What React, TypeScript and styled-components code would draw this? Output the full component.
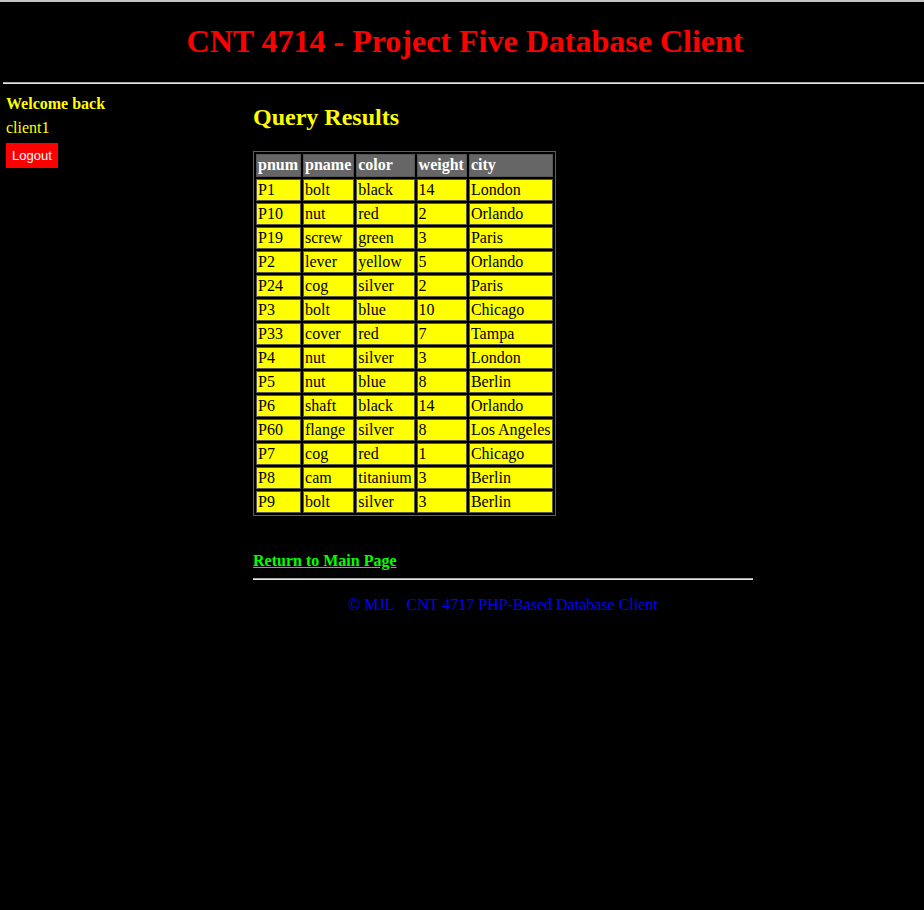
import React from 'react';
import styled, { createGlobalStyle } from 'styled-components';

const GlobalStyle = createGlobalStyle`
  html, body {
    margin: 0;
    padding: 0;
    background: #000;
  }
  body {
    font-family: "Liberation Serif", "Times New Roman", serif;
    font-size: 16px;
    color: #fff;
  }
`;

const Page = styled.div`
  min-height: 100vh;
  background: #000;
  border-top: 2px solid #c4c4c4;
`;

const Header = styled.header`
  padding-left: 6px;
  text-align: center;
`;

const Title = styled.h1`
  margin: 21px 0 22px;
  font-size: 32px;
  font-weight: bold;
  color: #ff0000;
`;

const Rule = styled.hr<{ $width?: string; $indent?: string; $top?: string }>`
  margin: ${(p) => p.$top || '0'} 0 0 ${(p) => p.$indent || '0'};
  width: ${(p) => p.$width || 'auto'};
  height: 0;
  border: 0;
  border-top: 1px solid #a8a8a8;
  border-bottom: 1px solid #e4e4e4;
`;

const Layout = styled.div`
  display: flex;
  align-items: flex-start;
`;

const Sidebar = styled.aside`
  width: 247px;
  padding: 8px 0 0 6px;
  color: #ffff00;
  line-height: 24px;
`;

const Welcome = styled.div`
  font-weight: bold;
`;

const UserName = styled.div``;

const LogoutButton = styled.button`
  margin-top: 3px;
  padding: 5px 6px;
  border: 0;
  background: #ff0000;
  color: #fff;
  font-family: "Liberation Sans", Arial, sans-serif;
  font-size: 13px;
  line-height: 15px;
  cursor: pointer;
`;

const Main = styled.main`
  width: 500px;
`;

const Heading = styled.h2`
  margin: 20px 0 20px;
  font-size: 24px;
  font-weight: bold;
  color: #ffff00;
`;

const ResultsTable = styled.table`
  border: 1px solid #5e5e5e;
  border-spacing: 2px;
  border-collapse: separate;
  font-size: 16px;
`;

const HeadCell = styled.th`
  padding: 1px 2px 2px 1px;
  border: 1px solid #565656;
  background: #666;
  color: #fff;
  text-align: left;
  font-weight: bold;
`;

const Cell = styled.td`
  padding: 1px 2px 1px 1px;
  border: 1px solid #565656;
  background: #ffff00;
  color: #000;
  white-space: nowrap;
`;

const ReturnLink = styled.a`
  display: inline-block;
  margin-top: 36px;
  color: #00ff00;
  font-weight: bold;
  text-decoration: underline;
`;

const FooterNote = styled.p`
  margin: 16px 0 0;
  color: #0000ff;
  text-align: center;
`;

const columns = ['pnum', 'pname', 'color', 'weight', 'city'];

const rows: string[][] = [
  ['P1', 'bolt', 'black', '14', 'London'],
  ['P10', 'nut', 'red', '2', 'Orlando'],
  ['P19', 'screw', 'green', '3', 'Paris'],
  ['P2', 'lever', 'yellow', '5', 'Orlando'],
  ['P24', 'cog', 'silver', '2', 'Paris'],
  ['P3', 'bolt', 'blue', '10', 'Chicago'],
  ['P33', 'cover', 'red', '7', 'Tampa'],
  ['P4', 'nut', 'silver', '3', 'London'],
  ['P5', 'nut', 'blue', '8', 'Berlin'],
  ['P6', 'shaft', 'black', '14', 'Orlando'],
  ['P60', 'flange', 'silver', '8', 'Los Angeles'],
  ['P7', 'cog', 'red', '1', 'Chicago'],
  ['P8', 'cam', 'titanium', '3', 'Berlin'],
  ['P9', 'bolt', 'silver', '3', 'Berlin'],
];

const App: React.FC = () => {
  return (
    <Page>
      <GlobalStyle />
      <Header>
        <Title>CNT 4714 - Project Five Database Client</Title>
      </Header>
      <Rule $indent="3px" />
      <Layout>
        <Sidebar>
          <Welcome>Welcome back</Welcome>
          <UserName>client1</UserName>
          <LogoutButton>Logout</LogoutButton>
        </Sidebar>
        <Main>
          <Heading>Query Results</Heading>
          <ResultsTable>
            <thead>
              <tr>
                {columns.map((c) => (
                  <HeadCell key={c}>{c}</HeadCell>
                ))}
              </tr>
            </thead>
            <tbody>
              {rows.map((r) => (
                <tr key={r[0]}>
                  {r.map((v, i) => (
                    <Cell key={i}>{v}</Cell>
                  ))}
                </tr>
              ))}
            </tbody>
          </ResultsTable>
          <ReturnLink href="#">Return to Main Page</ReturnLink>
          <Rule $width="500px" $top="8px" />
          <FooterNote>© MJL&nbsp;&nbsp;&nbsp;CNT 4717 PHP-Based Database Client</FooterNote>
        </Main>
      </Layout>
    </Page>
  );
};

export default App;
